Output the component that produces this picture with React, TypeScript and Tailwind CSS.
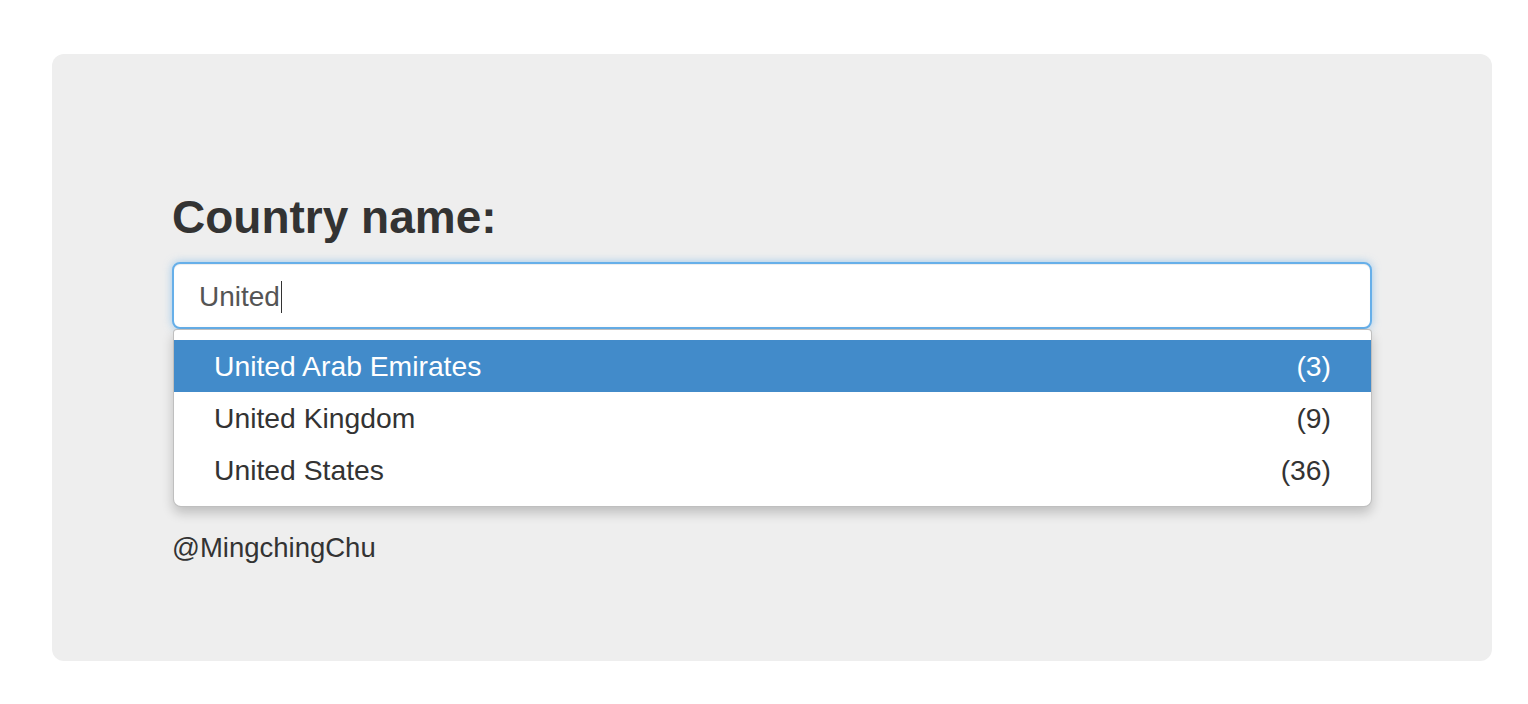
const COUNTRIES = [
  { name: 'United Arab Emirates', count: 3 },
  { name: 'United Kingdom', count: 9 },
  { name: 'United States', count: 36 },
]

export default function App() {
  const active = 0

  return (
    <div className="min-h-screen bg-white pt-[54px] pl-[52px] pr-[36px] font-['Liberation_Sans',Arial,sans-serif]">
      <div className="h-[607px] rounded-[12px] bg-[#eeeeee] px-[120px] pt-[138px]">
        <h2 className="text-[46px] font-bold leading-[1.1] text-[#333333]">Country name:</h2>

        {/* Typeahead */}
        <div className="relative mt-[19px]">
          <div className="flex h-[67px] items-center rounded-[8px] border-2 border-[#66afe9] bg-white pl-[25px] pt-[3px] text-[28px] text-[#555555] shadow-[inset_0_1px_1px_rgba(0,0,0,0.075),0_0_8px_rgba(102,175,233,0.6)]">
            <span>United</span>
            <span className="ml-[1px] h-[32px] w-[1.5px] bg-[#333333]" />
          </div>

          <ul className="absolute left-[1px] right-0 top-[67px] z-10 rounded-b-[8px] rounded-t-[4px] border border-[rgba(0,0,0,0.25)] bg-white py-[10px] shadow-[0_6px_12px_rgba(0,0,0,0.2)]">
            {COUNTRIES.map((c, i) => (
              <li
                key={c.name}
                className={`flex h-[52px] items-center justify-between pl-[40px] pr-[40px] pt-[2px] text-[28.3px] ${
                  i === active ? 'bg-[#428bca] text-white' : 'text-[#333333]'
                }`}
              >
                <span>{c.name}</span>
                <span>({c.count})</span>
              </li>
            ))}
          </ul>
        </div>

        <p className="mt-[202px] text-[27.5px] leading-[1.2] text-[#333333]">@MingchingChu</p>
      </div>
    </div>
  )
}
